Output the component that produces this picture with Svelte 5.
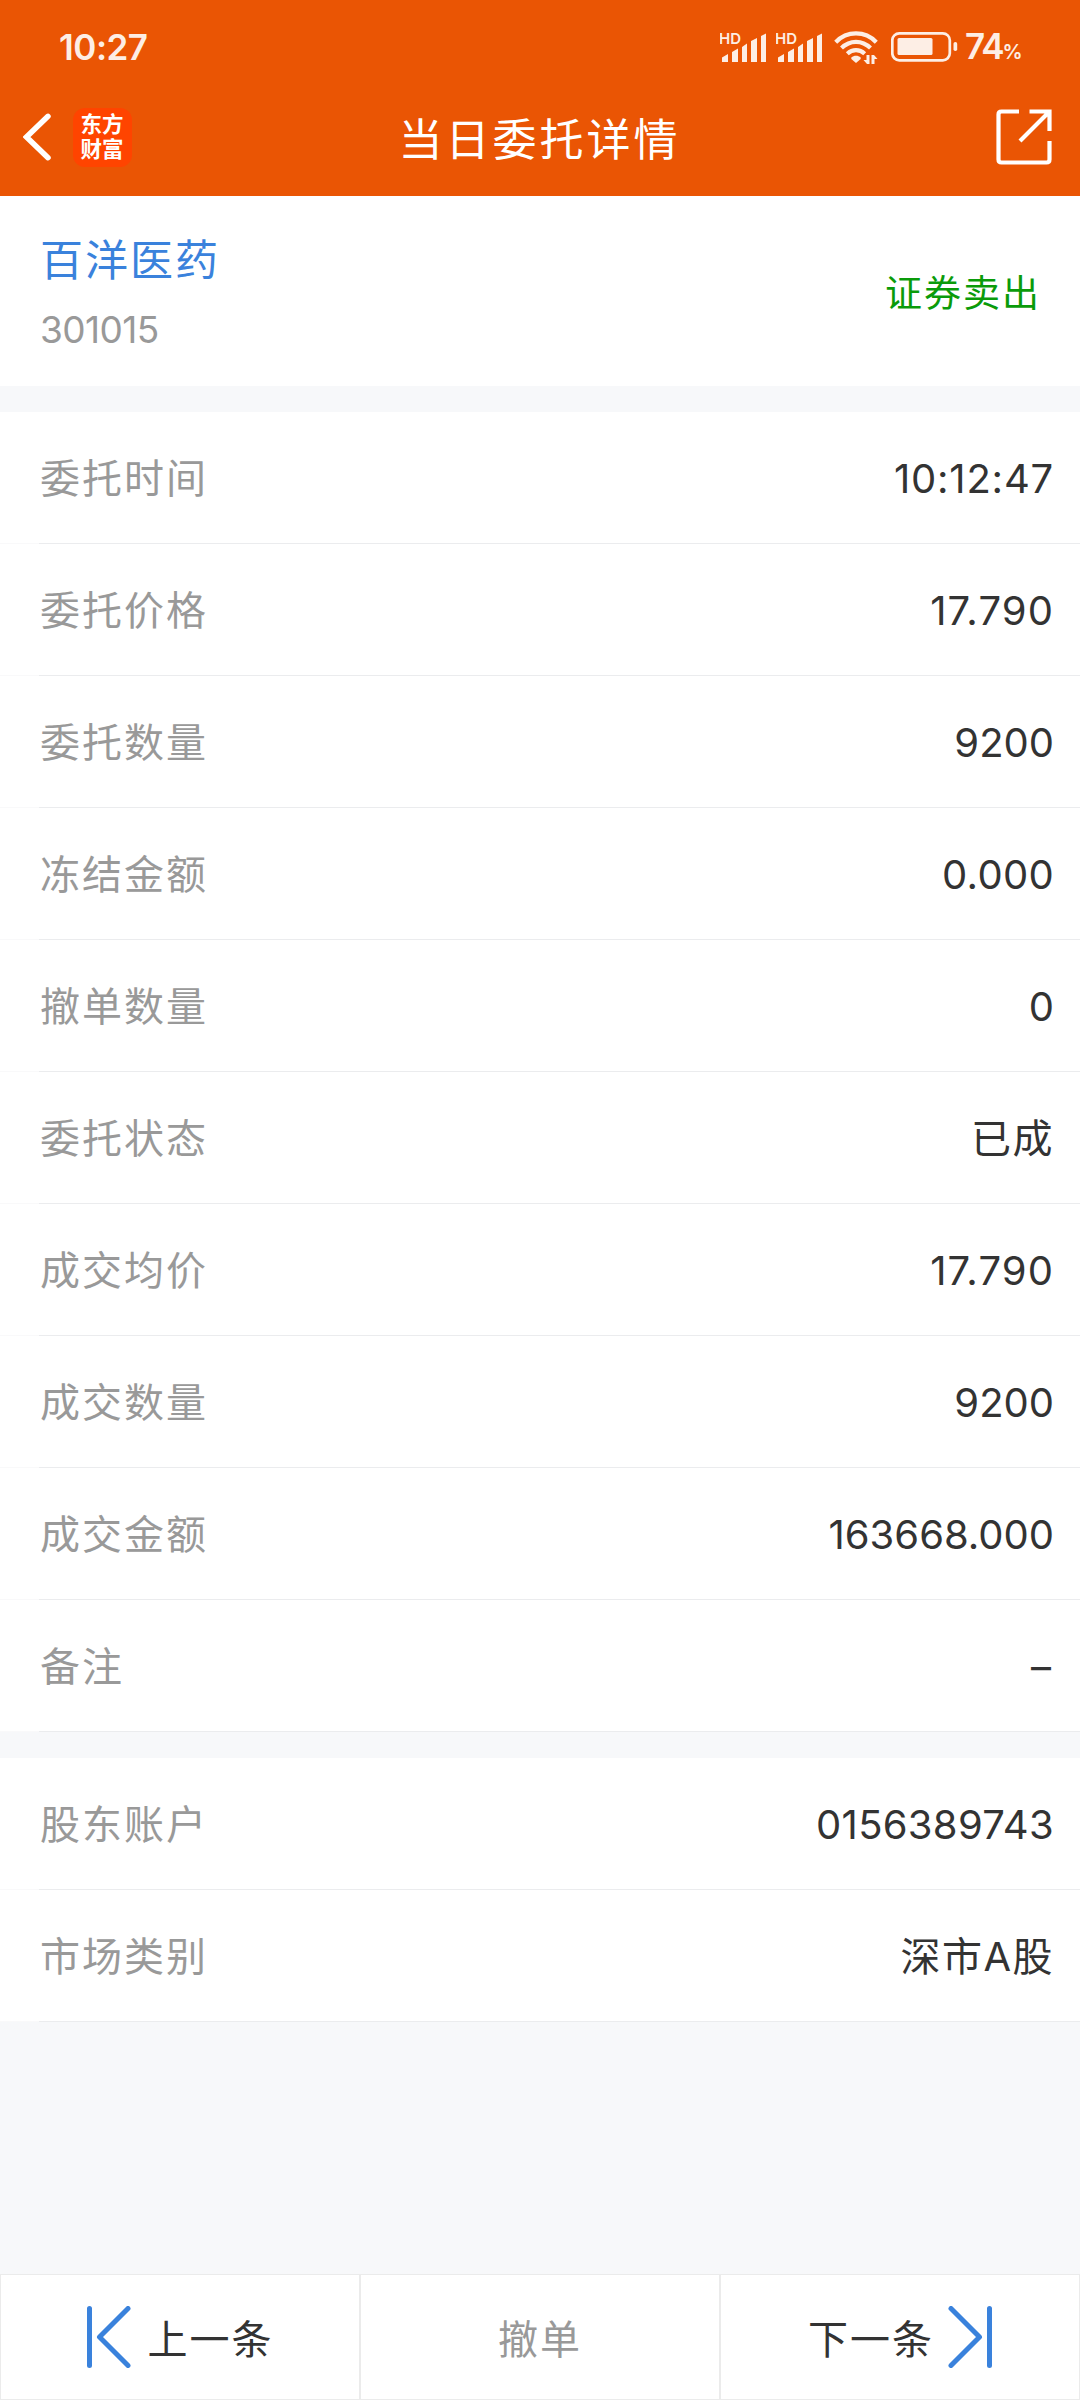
<script lang="ts">
  type Row = {
    label: string;
    value: string;
    tracking: number;
  };

  const order: Row[] = [
    { label: "委托时间", value: "10:12:47", tracking: 0.8 },
    { label: "委托价格", value: "17.790", tracking: 1.1 },
    { label: "委托数量", value: "9200", tracking: 0 },
    { label: "冻结金额", value: "0.000", tracking: 0.3 },
    { label: "撤单数量", value: "0", tracking: 0 },
    { label: "委托状态", value: "已成", tracking: 1.5 },
    { label: "成交均价", value: "17.790", tracking: 1.1 },
    { label: "成交数量", value: "9200", tracking: 0 },
    { label: "成交金额", value: "163668.000", tracking: 0 },
    { label: "备注", value: "–", tracking: 3 },
  ];

  const account: Row[] = [
    { label: "股东账户", value: "0156389743", tracking: 0.3 },
    { label: "市场类别", value: "深市A股", tracking: 1.5 },
  ];
</script>

{#snippet signal()}
  <svg class="signal" width="48" height="34" viewBox="0 0 48 34">
    <text x="-1" y="13.5">HD</text>
    <path d="M2 27.500L8 24V32H2zM12 22L18 18.500V32H12zM22 17L27 13.500V32H22zM31 11L37 8V32H31zM41 6L46 3.500V32H41z" />
  </svg>
{/snippet}

{#snippet list(rows: Row[])}
  <section class="list">
    {#each rows as row}
      <div class="row">
        <span class="label">{row.label}</span>
        <span class="value" style="letter-spacing: {row.tracking}px">{row.value}</span>
      </div>
    {/each}
  </section>
{/snippet}

<div class="page">
  <header>
    <div class="status">
      <span class="clock">10:27</span>
      <div class="indicators">
        {@render signal()}
        {@render signal()}
        <svg class="wifi" width="44" height="34" viewBox="0 0 44 34">
          <g fill="none" stroke-width="4.200">
            <path d="M1.700 12.200C13 0.500 31 0.500 42.300 12.200" />
            <path d="M7.500 18C16 9.800 28 9.800 36.500 18" />
            <path d="M13.300 23.800C18.500 19 25.500 19 30.700 23.800" />
          </g>
          <path class="solid" d="M17.300 27.500C20 25.300 24 25.300 26.700 27.500V29L22 33L17.300 29z" />
          <path class="solid" d="M32.500 25h3v9h-2.500l-3.500-4h3zM37.500 25H40l3.500 4h-3v5h-3z" />
        </svg>
        <svg class="battery" width="68" height="34" viewBox="0 0 68 34">
          <rect x="1.300" y="3.300" width="57.500" height="27" rx="7" fill="none" stroke-width="2.700" />
          <rect class="solid" x="6.500" y="8" width="35" height="17" rx="1.500" />
          <rect class="solid" x="62.500" y="12" width="3.700" height="9" rx="1.800" />
        </svg>
        <span class="percent">74<small>%</small></span>
      </div>
    </div>
    <div class="navbar">
      <div class="nav-left">
        <svg width="28" height="50" viewBox="0 0 28 50">
          <path d="M25 4.300L3.500 25L25 45.700" fill="none" stroke="#fff" stroke-width="5.500" stroke-linecap="round" />
        </svg>
        <div class="logo">
          <span>东方</span>
          <span>财富</span>
        </div>
      </div>
      <h1>当日委托详情</h1>
      <svg class="share" width="56" height="56" viewBox="0 0 56 56">
        <g fill="none" stroke="#fff" stroke-width="4.200">
          <path d="M23 2.500H5.500Q2.500 2.500 2.500 5.500V50.500Q2.500 53.500 5.500 53.500H50.500Q53.500 53.500 53.500 50.500V32" />
          <path d="M33.500 2.500H53.500V22M53 3L24 32" />
        </g>
      </svg>
    </div>
  </header>

  <section class="summary">
    <div>
      <div class="name">百洋医药</div>
      <div class="code">301015</div>
    </div>
    <span class="side">证券卖出</span>
  </section>

  {@render list(order)}
  {@render list(account)}

  <footer>
    <button>
      <svg width="44" height="62" viewBox="0 0 44 62">
        <path d="M2.500 2.500V59.500M41 2.500L12.500 31L41 59.500" />
      </svg>
      上一条
    </button>
    <button class="disabled">撤单</button>
    <button class="next">
      下一条
      <svg width="44" height="62" viewBox="0 0 44 62">
        <path d="M41.500 2.500V59.500M3 2.500L31.500 31L3 59.500" />
      </svg>
    </button>
  </footer>
</div>

<style>
  :global(body) {
    margin: 0;
    background: #f7f8fa;
  }

  .page {
    display: flex;
    flex-direction: column;
    width: 1080px;
    height: 2400px;
    background: #f7f8fa;
    color: #333;
    font-family: Inter, "Noto Sans CJK SC", sans-serif;
  }

  header {
    height: 196px;
    background: #ea5504;
    color: #fff;
  }

  .status {
    display: flex;
    justify-content: space-between;
    align-items: center;
    box-sizing: border-box;
    height: 92px;
    padding: 1px 59px 0 59px;
    color: #fdeee5;
  }

  .clock {
    font-size: 35px;
    font-weight: 600;
    line-height: 44px;
    letter-spacing: -0.5px;
  }

  .indicators {
    display: flex;
    align-items: center;
  }

  .indicators svg {
    fill: #fdeee5;
    stroke: #fdeee5;
  }

  .signal {
    margin-right: 8px;
  }

  .indicators .signal,
  .indicators .solid {
    stroke: none;
  }

  .signal text {
    font: 600 15px Inter, sans-serif;
  }

  .wifi {
    margin: 0 13px 0 2px;
  }

  .battery {
    margin-right: 6px;
  }

  .percent {
    width: 56px;
    padding-top: 4px;
    font-size: 35px;
    font-weight: 600;
    line-height: 44px;
    letter-spacing: -2px;
    white-space: nowrap;
  }

  .percent small {
    font-size: 20px;
    font-weight: 600;
  }

  .navbar {
    display: grid;
    grid-template-columns: 1fr auto 1fr;
    align-items: center;
    height: 90px;
    padding: 0 28px 0 23px;
  }

  .nav-left {
    display: flex;
    align-items: center;
    gap: 22px;
  }

  .logo {
    display: flex;
    flex-direction: column;
    align-items: center;
    box-sizing: border-box;
    width: 59px;
    height: 59px;
    padding: 2px 1px 0 0;
    border-radius: 12px;
    background: #ff4400;
    font: 700 21.5px/25px "Noto Sans CJK SC", sans-serif;
  }

  h1 {
    margin: 5px 0 0 4px;
    font-size: 44px;
    font-weight: 400;
    line-height: 60px;
    letter-spacing: 3px;
  }

  .share {
    justify-self: end;
  }

  .summary {
    display: flex;
    justify-content: space-between;
    align-items: center;
    height: 190px;
    padding: 0 39px 0 40px;
    background: #fff;
  }

  .name {
    color: #3a82dc;
    font-size: 43px;
    line-height: 64px;
    letter-spacing: 2px;
  }

  .code {
    margin-top: 13px;
    color: #999;
    font-size: 37px;
    line-height: 50px;
    letter-spacing: -0.600px;
  }

  .side {
    color: #0a9b0a;
    font-size: 37px;
    letter-spacing: 2px;
  }

  .list {
    margin-top: 26px;
  }

  .row {
    display: flex;
    justify-content: space-between;
    align-items: center;
    box-sizing: border-box;
    height: 132px;
    padding: 2px 26px 0 40px;
    background:
      linear-gradient(#ebecee, #ebecee) 39px 100% / 100% 1px no-repeat,
      linear-gradient(#f9f9fa, #f9f9fa) 0 100% / 39px 1px no-repeat,
      #fff;
    font-size: 40px;
    line-height: 60px;
  }

  .label {
    color: #999;
    letter-spacing: 2px;
  }

  footer {
    display: grid;
    grid-template-columns: repeat(3, 1fr);
    height: 126px;
    margin-top: auto;
  }

  button {
    display: flex;
    justify-content: center;
    align-items: center;
    gap: 17px;
    padding: 0 0 1px;
    border: 1px solid #ebebeb;
    background: #fff;
    color: #333;
    font: 40px "Noto Sans CJK SC", sans-serif;
    letter-spacing: 2px;
  }

  .next {
    gap: 14px;
  }

  .disabled {
    color: #999;
  }

  button svg {
    fill: none;
    stroke: #3a82dc;
    stroke-width: 5;
    stroke-linecap: round;
    stroke-linejoin: round;
  }
</style>
